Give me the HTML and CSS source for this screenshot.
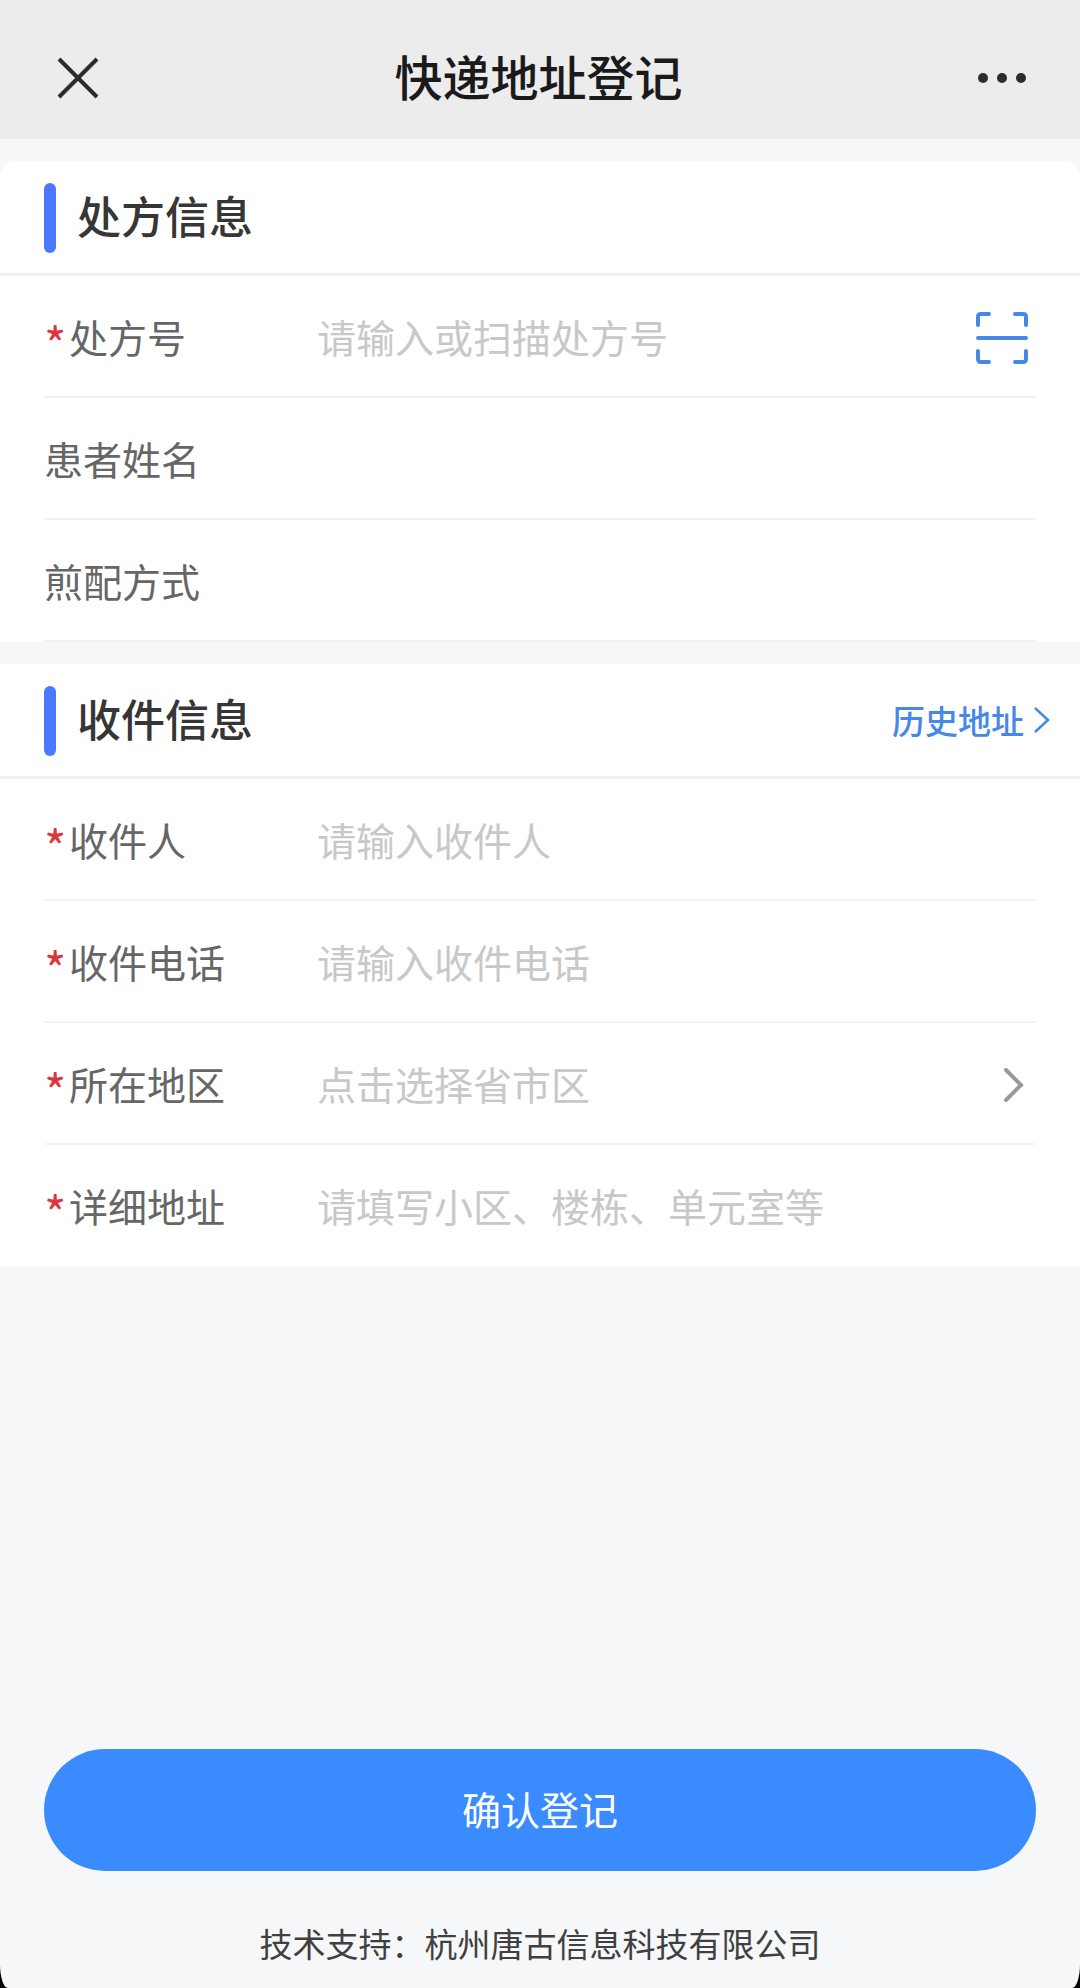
FILE: index.html
```html
<!DOCTYPE html>
<html lang="zh-CN">
<head>
<meta charset="UTF-8" />
<meta name="viewport" content="width=device-width, initial-scale=1" />
<title>快递地址登记</title>
<link rel="stylesheet" href="styles.css">
</head>
<body>

<form class="page">
  <header class="navbar">
    <button type="button" class="icon-btn" aria-label="关闭">
      <svg width="44" height="44" viewBox="0 0 44 44" fill="none" stroke="#2c2c2c" stroke-width="4">
        <path d="M3 3L41 41M41 3L3 41"/>
      </svg>
    </button>
    <h1>快递地址登记</h1>
    <button type="button" class="icon-btn" aria-label="更多">
      <svg width="50" height="12" viewBox="0 0 50 12" fill="#2c2c2c">
        <circle cx="6" cy="6" r="5"/><circle cx="25" cy="6" r="5"/><circle cx="44" cy="6" r="5"/>
      </svg>
    </button>
  </header>

  <section class="card card-first">
    <div class="card-head">
      <h2>处方信息</h2>
    </div>
    <div class="row">
      <label for="rxNo"><span class="star">*</span>处方号</label>
      <input id="rxNo" type="text" placeholder="请输入或扫描处方号">
      <button type="button" class="icon-btn scan" aria-label="扫描">
        <svg width="52" height="52" viewBox="0 0 52 52" fill="none" stroke="#4688e8" stroke-width="4" stroke-linecap="round">
          <path d="M2 13V5Q2 2 5 2H13M39 2H47Q50 2 50 5V13M50 39V47Q50 50 47 50H39M13 50H5Q2 50 2 47V39M2 26H50"/>
        </svg>
      </button>
    </div>
    <div class="row">
      <label for="patient">患者姓名</label>
      <input id="patient" type="text" readonly>
    </div>
    <div class="row">
      <label for="method">煎配方式</label>
      <input id="method" type="text" readonly>
    </div>
  </section>

  <section class="card">
    <div class="card-head">
      <h2>收件信息</h2>
      <a href="#" class="history">历史地址
        <svg width="16" height="26" viewBox="0 0 16 26" fill="none" stroke="#4688e8" stroke-width="2.5">
          <path d="M1 1L14 13L1 25"/>
        </svg>
      </a>
    </div>
    <div class="row">
      <label for="receiver"><span class="star">*</span>收件人</label>
      <input id="receiver" type="text" placeholder="请输入收件人">
    </div>
    <div class="row">
      <label for="phone"><span class="star">*</span>收件电话</label>
      <input id="phone" type="tel" placeholder="请输入收件电话">
    </div>
    <div class="row">
      <label for="area"><span class="star">*</span>所在地区</label>
      <select id="area">
        <option value="">点击选择省市区</option>
      </select>
      <svg class="arrow" width="20" height="34" viewBox="0 0 20 34" fill="none" stroke="#999" stroke-width="4" stroke-linecap="round">
        <path d="M2 2L17 17L2 32"/>
      </svg>
    </div>
    <div class="row">
      <label for="detail"><span class="star">*</span>详细地址</label>
      <input id="detail" type="text" placeholder="请填写小区、楼栋、单元室等">
    </div>
  </section>

  <footer class="bottom">
    <button type="submit" class="submit">确认登记</button>
    <p>技术支持：杭州唐古信息科技有限公司</p>
  </footer>
</form>

</body>
</html>
```
FILE: styles.css
```css
* {
  box-sizing: border-box;
}
html {
  background: #000;
}
body, h1, h2, p {
  margin: 0;
}
body, input, select, button {
  font-family: "Noto Sans CJK SC", sans-serif;
}
.page {
  display: flex;
  flex-direction: column;
  min-height: 100vh;
  background: #f5f7f9;
  border-radius: 0 0 8px 8px / 0 0 24px 24px;
}

/* top bar */
.navbar {
  display: flex;
  align-items: center;
  justify-content: space-between;
  height: 139px;
  padding: 17px 53px 0 56px;
  background: #ececec;
}
.navbar h1 {
  padding-bottom: 6px;
  font-size: 48px;
  line-height: 72px;
  font-weight: 500;
  color: #1a1a1a;
}
.icon-btn {
  display: flex;
  padding: 0;
  border: 0;
  background: none;
}

/* cards */
.card {
  margin-top: 22px;
  background: #fff;
}
.card-first {
  border-radius: 16px 16px 0 0;
}
.card-head {
  display: flex;
  align-items: center;
  gap: 21px;
  height: 115px;
  padding: 2px 30px 0 44px;
  border-bottom: 3px solid #f0f0f0;
}
.card-head::before {
  content: "";
  width: 12px;
  height: 70px;
  border-radius: 6px;
  background: #4a78ff;
}
.card-head h2 {
  padding-bottom: 6px;
  font-size: 44px;
  line-height: 64px;
  font-weight: 500;
  color: #363636;
}
.history {
  display: flex;
  align-items: center;
  gap: 10px;
  margin-left: auto;
  padding-bottom: 2px;
  font-size: 33px;
  line-height: 44px;
  font-weight: 500;
  color: #4688e8;
  text-decoration: none;
}

/* form rows */
.row {
  display: flex;
  align-items: center;
  height: 122px;
  margin: 0 44px;
  padding-top: 3px;
  border-bottom: 2px solid #f2f2f2;
}
.card:not(.card-first) .row:last-child {
  border-bottom-color: transparent;
}
.row label {
  display: flex;
  width: 273px;
  height: 60px;
  font-size: 39px;
  line-height: 56px;
  color: #666;
}
.star {
  width: 25px;
  font-size: 48px;
  line-height: 68px;
  color: #d9363e;
}
.row input,
.row select {
  flex: 1;
  min-width: 0;
  height: 60px;
  padding: 0 0 4px;
  border: 0;
  outline: 0;
  background: none;
  appearance: none;
  font-size: 39px;
  line-height: 56px;
  color: #333;
}
.row select,
.row input::placeholder {
  color: #c8c8c8;
}
.scan {
  margin-right: 8px;
}
.arrow {
  margin-right: 12px;
}

/* submit + support */
.bottom {
  display: flex;
  flex-direction: column;
  gap: 50px;
  margin-top: auto;
  padding: 0 44px 23px;
}
.submit {
  height: 122px;
  padding: 0 0 4px;
  border: 0;
  border-radius: 61px;
  background: #3a8bfd;
  font-size: 39px;
  color: #fff;
}
.bottom p {
  font-size: 33px;
  line-height: 44px;
  text-align: center;
  color: #404040;
}
```
